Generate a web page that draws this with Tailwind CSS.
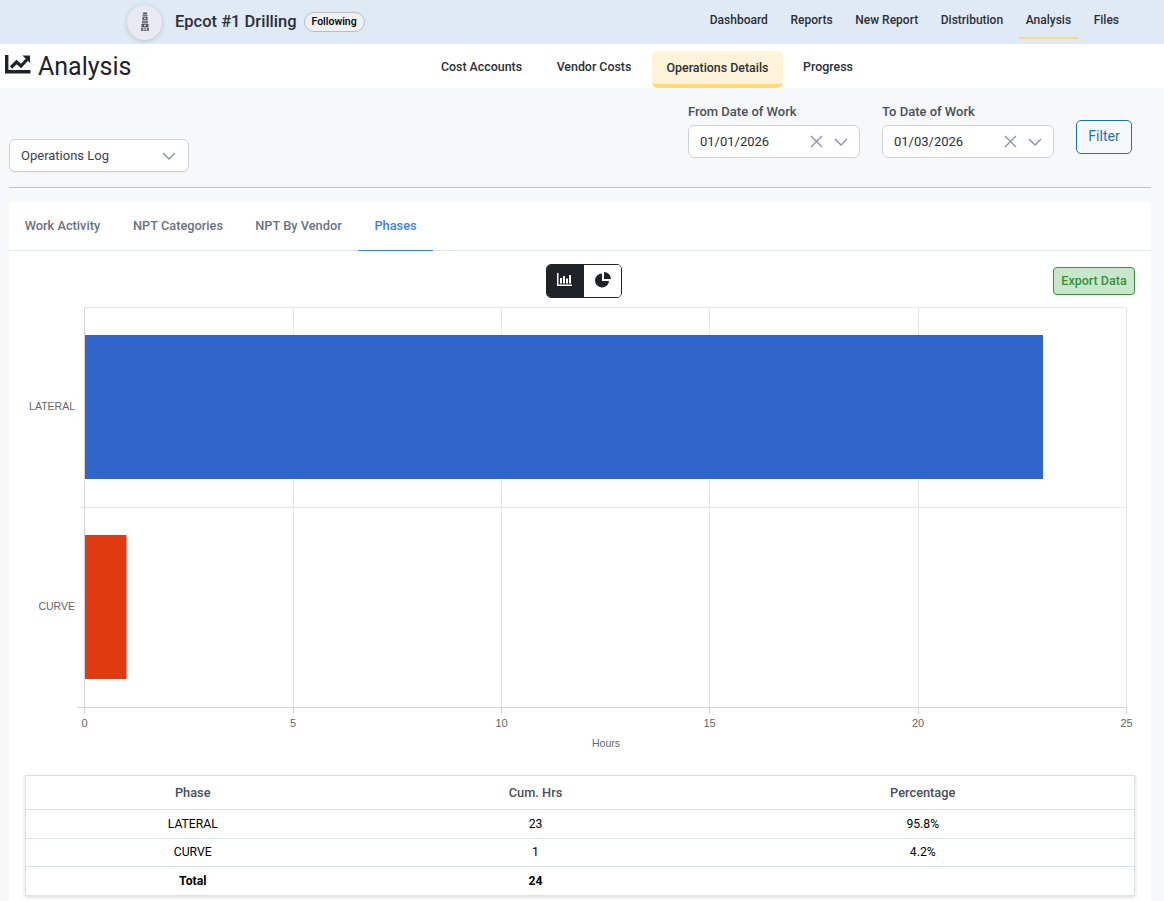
<!DOCTYPE html>
<html lang="en">
<head>
  <meta charset="UTF-8">
  <title>Analysis</title>
  <script src="https://cdn.jsdelivr.net/npm/@tailwindcss/browser@4"></script>
</head>
<body class="bg-[#f7f8fa] text-[#1f2328] font-[Roboto,sans-serif] overflow-hidden h-[901px]">

  <!-- top bar -->
  <header class="h-[44px] bg-[#e0eaf5] flex items-center pl-[127px] pr-[38px]">
    <div class="w-[35px] h-[35px] rounded-full bg-[#e8eaf4] shadow-[0_1px_5px_rgba(0,0,0,0.18)] flex items-center justify-center">
      <svg width="10" height="20" viewBox="0 0 10 20" fill="#55585f">
        <path d="M3 0.5h4v2H3z"/>
        <path d="M2.5 3h5v1.5h-5z" fill="#6d7078"/>
        <path d="M2.5 5h5v3h-5z"/>
        <path d="M4 5.8h2v1.4H4z" fill="#c9cbd3"/>
        <path d="M2 8.5h6v3H2z" fill="#777a82"/>
        <path d="M1.5 12h7v3h-7z"/>
        <path d="M4 12.8h2v1.4H4z" fill="#c9cbd3"/>
        <path d="M1 15.5h8v3.5H1z" fill="#6d7078"/>
        <path d="M3 16.3h1.5v2H3zM5.5 16.3H7v2H5.5z" fill="#d4d6dd"/>
      </svg>
    </div>
    <h1 class="ml-[13px] text-[16.5px] font-medium text-[#2b2f36]">Epcot #1 Drilling</h1>
    <span class="ml-[7px] h-[20px] w-[61px] flex items-center justify-center rounded-full border border-[#b9bcc2] bg-[#eef0f3] text-[10.5px] font-medium text-black">Following</span>
    <nav class="ml-auto flex gap-[8.6px] text-[12px] font-medium text-[#2b2f36] h-[44px]">
      <a class="px-[7px] flex items-center pb-[4px]">Dashboard</a>
      <a class="px-[7px] flex items-center pb-[4px]">Reports</a>
      <a class="px-[7px] flex items-center pb-[4px]">New Report</a>
      <a class="px-[7px] flex items-center pb-[4px]">Distribution</a>
      <a class="px-[7px] flex items-center pb-[4px] relative">Analysis<span class="absolute left-0 right-0 bottom-[5px] h-[2px] bg-[#ffd978]"></span></a>
      <a class="px-[7px] flex items-center pb-[4px]">Files</a>
    </nav>
  </header>

  <!-- page title + sub nav -->
  <div class="h-[44px] bg-white relative flex items-center pl-[5px]">
    <svg width="26" height="21" viewBox="0 0 26 21" fill="none" stroke="#1f2328" class="mb-[3px]">
      <path d="M1.7 1v16.8H25.5" stroke-width="3.4"/>
      <path d="M6 13.5l5.5-5.5 4.5 4 7-7.5" stroke-width="3.2"/>
      <path d="M17.5 1.5h7.5v7.5z" fill="#1f2328" stroke="none"/>
    </svg>
    <h2 class="ml-[7px] pt-[1px] text-[25px] text-[#1f2328]">Analysis</h2>
    <nav class="absolute left-[431px] top-[7px] flex text-[12.4px] font-medium text-[#2b2f36] h-[37px]">
      <a class="w-[101px] flex items-center justify-center mr-[6px] pb-[5px]">Cost Accounts</a>
      <a class="w-[112px] flex items-center justify-center mr-[2px] pb-[5px]">Vendor Costs</a>
      <a class="w-[131px] flex items-center justify-center bg-[#fff4d9] rounded-[6px] border-b-[4px] border-[#ffd978] pt-[1px]">Operations Details</a>
      <a class="w-[90px] flex items-center justify-center pb-[5px]">Progress</a>
    </nav>
  </div>

  <!-- filters -->
  <div class="ml-[9px] mr-[13px] h-[100px] border-b border-[#bfc1c6] relative">
    <div class="absolute left-0 top-[51px] w-[180px] h-[33px] bg-white border border-[#cdd3de] rounded-[6px] flex items-center justify-between pl-[11px] pr-[12px] text-[13px] text-[#3a4150] shadow-[0_1px_1px_rgba(0,0,0,0.04)]">
      Operations Log
      <svg width="14" height="8" viewBox="0 0 14 8" fill="none" stroke="#8a90a0" stroke-width="1.4"><path d="M1 1l6 6 6-6"/></svg>
    </div>
    <div class="absolute left-[679px] top-[15px]">
      <label class="block text-[13px] font-medium text-[#4a4f5a] leading-[18px] mb-[4px]">From Date of Work</label>
      <div class="w-[172px] h-[33px] bg-white border border-[#cdd3de] rounded-[6px] flex items-center pl-[11px] pr-[11px] text-[13px] text-[#2b2f36]">
        01/01/2026
        <svg class="ml-auto" width="13" height="13" viewBox="0 0 13 13" fill="none" stroke="#8a90a0" stroke-width="1.3"><path d="M1 1l11 11M12 1L1 12"/></svg>
        <svg class="ml-[11px]" width="14" height="8" viewBox="0 0 14 8" fill="none" stroke="#8a90a0" stroke-width="1.4"><path d="M1 1l6 6 6-6"/></svg>
      </div>
    </div>
    <div class="absolute left-[873px] top-[15px]">
      <label class="block text-[13px] font-medium text-[#4a4f5a] leading-[18px] mb-[4px]">To Date of Work</label>
      <div class="w-[172px] h-[33px] bg-white border border-[#cdd3de] rounded-[6px] flex items-center pl-[11px] pr-[11px] text-[13px] text-[#2b2f36]">
        01/03/2026
        <svg class="ml-auto" width="13" height="13" viewBox="0 0 13 13" fill="none" stroke="#8a90a0" stroke-width="1.3"><path d="M1 1l11 11M12 1L1 12"/></svg>
        <svg class="ml-[11px]" width="14" height="8" viewBox="0 0 14 8" fill="none" stroke="#8a90a0" stroke-width="1.4"><path d="M1 1l6 6 6-6"/></svg>
      </div>
    </div>
    <button class="absolute left-[1067px] top-[32px] w-[56px] h-[34px] border border-[#1a73b8] rounded-[5px] text-[14px] text-[#1a73b8] flex items-center justify-center pb-[2px]">Filter</button>
  </div>

  <!-- card -->
  <main class="ml-[9px] mr-[13px] mt-[14px] bg-white h-[699px]">
    <div class="h-[49px] border-b border-[#e2e6ee] flex text-[12.8px] font-medium text-[#6b7280]">
      <a class="w-[107px] flex items-center justify-center">Work Activity</a>
      <a class="w-[124px] flex items-center justify-center">NPT Categories</a>
      <a class="w-[117px] flex items-center justify-center">NPT By Vendor</a>
      <a class="ml-[1px] w-[75px] flex items-center justify-center text-[#3b82f6] border-b border-[#3b82f6] h-[49px]">Phases</a>
    </div>

    <!-- chart toolbar -->
    <div class="h-[56px] relative">
      <div class="absolute left-[537px] top-[13px] w-[76px] h-[34px] flex rounded-[5px] border border-[#1f2328] overflow-hidden">
        <div class="w-[37px] bg-[#1f2328] flex items-center justify-center pb-[3px] pr-[2px]">
          <svg width="15" height="13" viewBox="0 0 15 13" fill="#fff"><path d="M0 0h1.5v11.5H15V13H0z"/><path d="M3 5h2v5.5H3zM6 3h2v7.5H6zM9 5.5h2v5H9zM12 2h2v8.5h-2z"/></svg>
        </div>
        <div class="flex-1 bg-white flex items-center justify-center pb-[3px]">
          <svg width="16" height="16" viewBox="0 0 16 16" fill="#1f2328"><path d="M7 1.5a7 7 0 1 0 7 7.5H7z"/><path d="M9 0a7 7 0 0 1 7 7H9z"/></svg>
        </div>
      </div>
      <button class="absolute right-[16px] top-[16px] w-[82px] h-[28px] bg-[#c8e6c9] border border-[#388e3c] rounded-[4px] text-[12.5px] font-medium text-[#388e3c]">Export Data</button>
    </div>

    <!-- chart -->
    <svg width="1138" height="425" viewBox="0 0 1138 425" class="block -mt-[1px]" font-family="'Liberation Sans', sans-serif">
      <g stroke="#e6e6e6" fill="none">
        <path d="M75.5 1.5H1117.5V401.5"/>
        <path d="M284.5 1.5V401.5M492.5 1.5V401.5M700.5 1.5V401.5M909.5 1.5V401.5"/>
        <path d="M71 201.5H1117.5"/>
      </g>
      <rect x="76" y="29" width="958" height="144" fill="#3066cc"/>
      <rect x="76" y="229" width="41.5" height="144" fill="#e03a10"/>
      <g stroke="#d4d4d4" fill="none">
        <path d="M75.5 1.5V408M284.5 401.5V408M492.5 401.5V408M700.5 401.5V408M909.5 401.5V408M1117.5 401.5V408"/>
        <path d="M68 401.5H1117.5"/>
      </g>
      <g fill="#666" font-size="10.5" text-anchor="end">
        <text x="66" y="104">LATERAL</text>
        <text x="66" y="304">CURVE</text>
      </g>
      <g fill="#666" font-size="11" text-anchor="middle">
        <text x="75.5" y="421">0</text>
        <text x="284" y="421">5</text>
        <text x="492.5" y="421">10</text>
        <text x="700.5" y="421">15</text>
        <text x="909" y="421">20</text>
        <text x="1117.5" y="421">25</text>
      </g>
    </svg>
    <p class="text-center text-[10.5px] font-[Liberation_Sans,sans-serif] text-[#666] ml-[52px] mt-[5px] h-[39px] leading-[14px]">Hours</p>

    <!-- table -->
    <table class="ml-[16px] w-[1110px] table-fixed border border-[#dde2ea] shadow-[0_1px_3px_rgba(80,90,110,0.25)] text-[12.2px] text-black text-center">
      <thead>
        <tr class="h-[34px] text-[12.8px] text-[#4a4f5a]">
          <th class="w-[334px] font-medium pt-[1px]">Phase</th>
          <th class="w-[352px] font-medium pt-[1px]">Cum. Hrs</th>
          <th class="font-medium pt-[1px]">Percentage</th>
        </tr>
      </thead>
      <tbody>
        <tr class="h-[29px] border-t border-[#dde2ea]"><td>LATERAL</td><td>23</td><td>95.8%</td></tr>
        <tr class="h-[28px] border-t border-[#dde2ea]"><td class="pb-[1px]">CURVE</td><td class="pb-[1px]">1</td><td class="pb-[1px]">4.2%</td></tr>
        <tr class="h-[29px] border-t border-[#dde2ea] font-bold"><td>Total</td><td>24</td><td></td></tr>
      </tbody>
    </table>
  </main>

</body>
</html>
